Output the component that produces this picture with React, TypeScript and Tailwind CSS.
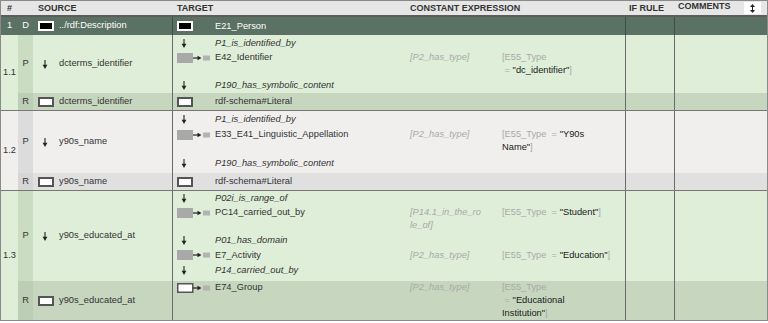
import React, { ReactNode } from "react";

function DownArrow() {
  return (
    <svg width="6" height="9" viewBox="0 0 6 9" className="block">
      <line x1="3" y1="0" x2="3" y2="6" stroke="#222" strokeWidth="1.1" />
      <polygon points="0.6,4.8 5.4,4.8 3,9" fill="#222" />
    </svg>
  );
}

function ClassIcon({ white }: { white?: boolean }) {
  return (
    <svg width="34" height="10" viewBox="0 0 34 10" className="block">
      {white ? (
        <rect x="0.75" y="0.75" width="15" height="8.5" fill="#fff" stroke="#555" strokeWidth="1.5" />
      ) : (
        <rect x="0" y="0" width="16" height="10" fill="#a9a9a9" />
      )}
      <line x1="16" y1="5" x2="22" y2="5" stroke="#222" strokeWidth="1.2" />
      <polygon points="20.5,2.8 24.5,5 20.5,7.2" fill="#222" />
      <rect x="26" y="2.5" width="7" height="5" fill="#b3b3b3" />
    </svg>
  );
}

function Box({ dark }: { dark?: boolean }) {
  return (
    <div
      className={
        dark
          ? "w-[16px] h-[10px] bg-black border-2 border-white"
          : "w-[16px] h-[10px] bg-white border-2 border-[#555]"
      }
    />
  );
}

function SortIcon() {
  return (
    <svg width="5" height="9" viewBox="0 0 5 9" className="block">
      <polygon points="2.5,0 5,3 0,3" fill="#222" />
      <rect x="2" y="3" width="1" height="3" fill="#222" />
      <polygon points="0,6 5,6 2.5,9" fill="#222" />
    </svg>
  );
}

const K = ({ children }: { children: ReactNode }) => <span className="text-[#1a1a1a]">{children}</span>;

type SubProps = {
  cls: string;
  icon: "arrow" | "class" | "classWhite" | "box" | "boxDark";
  text: string;
  italic?: boolean;
  c1?: ReactNode;
  c2?: ReactNode;
  light?: boolean;
};

function Sub({ cls, icon, text, italic, c1, c2, light }: SubProps) {
  let iconEl: ReactNode = null;
  let iconPad = "pl-[4px]";
  if (icon === "arrow") {
    iconEl = <DownArrow />;
    iconPad = "pl-[8px]";
  } else if (icon === "class") iconEl = <ClassIcon />;
  else if (icon === "classWhite") iconEl = <ClassIcon white />;
  else if (icon === "box") iconEl = <Box />;
  else iconEl = <Box dark />;
  return (
    <div className={`grid grid-cols-[40px_187px_100px_125px] leading-[13px] ${cls}`}>
      <div className={`h-[13px] flex items-center ${iconPad}`}>{iconEl}</div>
      <div className={`pl-[2px] whitespace-nowrap ${italic ? "italic" : ""} ${light ? "text-white" : ""}`}>{text}</div>
      <div className="pl-[10px] italic text-[#a9a9a9] whitespace-pre">{c1}</div>
      <div className="pl-[2px] text-[#a9a9a9] whitespace-pre">{c2}</div>
    </div>
  );
}

type RowProps = {
  h: string;
  bg: string;
  letterBg: string;
  letter: string;
  srcIcon: "arrow" | "box" | "boxDark";
  src: string;
  children: ReactNode;
  line?: string;
  light?: boolean;
};

function Row({ h, bg, letterBg, letter, srcIcon, src, children, line = "border-[#6b6b6b]", light }: RowProps) {
  return (
    <div className={`flex ${h} ${bg} ${light ? "text-white" : ""}`}>
      <div className={`w-[15px] flex items-center justify-center ${letterBg}`}>{letter}</div>
      <div className="w-[139px] flex items-center">
        {srcIcon === "arrow" ? (
          <div className="w-[26px] pl-[9px]">
            <DownArrow />
          </div>
        ) : (
          <div className="w-[26px] pl-[5px]">
            <Box dark={srcIcon === "boxDark"} />
          </div>
        )}
        <div className="whitespace-nowrap">{src}</div>
      </div>
      <div className={`w-[453px] border-l ${line} flex flex-col`}>{children}</div>
      <div className={`w-[49px] border-l ${line}`} />
      <div className={`w-[93px] border-l ${line}`} />
    </div>
  );
}

export default function App() {
  const greenP = "bg-[#dfeed8]";
  const greenPL = "bg-[#cadcc2]";
  const greenR = "bg-[#c6d6bf]";
  const greenRL = "bg-[#bdceb6]";
  const grayP = "bg-[#f0efee]";
  const grayPL = "bg-[#dcdcdc]";
  const grayR = "bg-[#e0e0e0]";
  const grayRL = "bg-[#d6d6d6]";

  return (
    <div className="w-[768px] h-[323px] bg-white font-['Liberation_Sans',Arial,sans-serif] text-[9.3px] text-[#333]">
      <div className="w-[768px] border border-[#8a8a8a]">
        {/* header */}
        <div className="flex h-[16px] bg-[#e6e6e6] border-b-2 border-[#5c5c5c] font-bold text-[9px] text-[#333] items-center pt-[1px]">
          <div className="w-[17px] text-center">#</div>
          <div className="w-[15px]" />
          <div className="w-[139px] pl-[5px]">SOURCE</div>
          <div className="w-[238px] pl-[5px]">TARGET</div>
          <div className="w-[215px]">CONSTANT EXPRESSION</div>
          <div className="w-[49px] pl-[4px]">IF RULE</div>
          <div className="w-[93px] pl-[4px] flex items-center">
            <span className="-mt-[3px]">COMMENTS</span>
            <div className="ml-auto mr-[6px] -mt-[1px] w-[17px] h-[12px] bg-white flex items-center justify-center">
              <SortIcon />
            </div>
          </div>
        </div>

        {/* D row */}
        <div className="flex">
          <div className="w-[17px] h-[18px] bg-[#5a7164] text-white flex items-center justify-center">1</div>
          <div className="w-[749px]">
            <Row
              h="h-[18px]"
              bg="bg-[#5a7164]"
              letterBg="bg-[#5a7164]"
              letter="D"
              srcIcon="boxDark"
              src="../rdf:Description"
              line="border-[#3e4e45]"
              light
            >
              <Sub cls="h-[18px] items-center" icon="boxDark" text="E21_Person" light />
            </Row>
          </div>
        </div>

        {/* 1.1 */}
        <div className="flex">
          <div className={`w-[17px] flex items-center justify-center ${greenP}`}>1.1</div>
          <div className="w-[749px] flex flex-col">
            <Row h="h-[58px]" bg={greenP} letterBg={greenPL} letter="P" srcIcon="arrow" src="dcterms_identifier">
              <Sub cls="h-[16px] items-center" icon="arrow" text="P1_is_identified_by" italic />
              <Sub
                cls="h-[26px] items-start"
                icon="class"
                text="E42_Identifier"
                c1="[P2_has_type]"
                c2={
                  <>
                    <div>[E55_Type</div>
                    <div>
                      {" = "}
                      <K>"dc_identifier"</K>]
                    </div>
                  </>
                }
              />
              <Sub cls="h-[16px] items-center" icon="arrow" text="P190_has_symbolic_content" italic />
            </Row>
            <Row h="h-[17px]" bg={greenR} letterBg={greenRL} letter="R" srcIcon="box" src="dcterms_identifier">
              <Sub cls="h-[17px] items-center" icon="box" text="rdf-schema#Literal" />
            </Row>
          </div>
        </div>

        {/* 1.2 */}
        <div className="flex border-t border-[#777]">
          <div className={`w-[17px] flex items-center justify-center ${grayP}`}>1.2</div>
          <div className="w-[749px] flex flex-col">
            <Row h="h-[62px]" bg={grayP} letterBg={grayPL} letter="P" srcIcon="arrow" src="y90s_name">
              <Sub cls="h-[17px] items-center" icon="arrow" text="P1_is_identified_by" italic />
              <Sub
                cls="h-[26px] items-start"
                icon="class"
                text="E33_E41_Linguistic_Appellation"
                c1="[P2_has_type]"
                c2={
                  <>
                    <div>
                      {"[E55_Type  = "}
                      <K>"Y90s</K>
                    </div>
                    <div>
                      <K>Name"</K>]
                    </div>
                  </>
                }
              />
              <Sub cls="h-[19px] items-center" icon="arrow" text="P190_has_symbolic_content" italic />
            </Row>
            <Row h="h-[17px]" bg={grayR} letterBg={grayRL} letter="R" srcIcon="box" src="y90s_name">
              <Sub cls="h-[17px] items-center" icon="box" text="rdf-schema#Literal" />
            </Row>
          </div>
        </div>

        {/* 1.3 */}
        <div className="flex border-t border-[#777]">
          <div className={`w-[17px] flex items-center justify-center ${greenP}`}>1.3</div>
          <div className="w-[749px] flex flex-col">
            <Row h="h-[90px]" bg={greenP} letterBg={greenPL} letter="P" srcIcon="arrow" src="y90s_educated_at">
              <Sub cls="h-[15px] items-center" icon="arrow" text="P02i_is_range_of" italic />
              <Sub
                cls="h-[27px] items-start"
                icon="class"
                text="PC14_carried_out_by"
                c1={
                  <>
                    <div>[P14.1_in_the_ro</div>
                    <div>le_of]</div>
                  </>
                }
                c2={
                  <div>
                    {"[E55_Type  = "}
                    <K>"Student"</K>]
                  </div>
                }
              />
              <Sub cls="h-[15px] items-center" icon="arrow" text="P01_has_domain" italic />
              <Sub
                cls="h-[14px] items-center"
                icon="class"
                text="E7_Activity"
                c1="[P2_has_type]"
                c2={
                  <div>
                    {"[E55_Type  = "}
                    <K>"Education"</K>]
                  </div>
                }
              />
              <Sub cls="h-[19px] items-start pt-[2px]" icon="arrow" text="P14_carried_out_by" italic />
            </Row>
            <Row h="h-[39px]" bg={greenR} letterBg={greenRL} letter="R" srcIcon="box" src="y90s_educated_at">
              <Sub
                cls="h-[39px] items-start"
                icon="classWhite"
                text="E74_Group"
                c1="[P2_has_type]"
                c2={
                  <>
                    <div>[E55_Type</div>
                    <div>
                      {" = "}
                      <K>"Educational</K>
                    </div>
                    <div>
                      <K>Institution"</K>]
                    </div>
                  </>
                }
              />
            </Row>
          </div>
        </div>
      </div>
    </div>
  );
}
